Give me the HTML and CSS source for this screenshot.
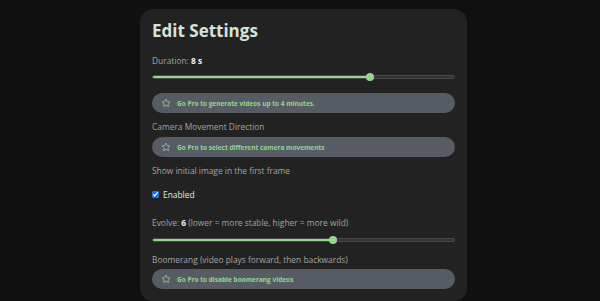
FILE: index.html
```html
<!DOCTYPE html>
<html lang="en">
<head>
    <meta charset="UTF-8">
    <meta name="viewport" content="width=device-width, initial-scale=1.0">
    <title>Edit Settings</title>
    <link rel="stylesheet" href="styles.css">
</head>
<body>
    <div class="settings-card">
        <h1>Edit Settings</h1>

        <div class="field-label label-duration">Duration: <b>8 s</b></div>
        <input type="range" class="slider slider-duration" min="0" max="11" step="0.5" value="8" style="--fill: 71.5%">

        <div class="pro-banner banner-first">
            <svg class="star" viewBox="0 0 24 24"><path d="M12 2.5l2.9 6 6.6.9-4.8 4.6 1.2 6.5L12 17.4l-5.9 3.1 1.2-6.5-4.8-4.6 6.6-.9z"/></svg>
            <span>Go Pro to generate videos up to 4 minutes.</span>
        </div>

        <div class="field-label label-camera">Camera Movement Direction</div>
        <div class="pro-banner banner-tight">
            <svg class="star" viewBox="0 0 24 24"><path d="M12 2.5l2.9 6 6.6.9-4.8 4.6 1.2 6.5L12 17.4l-5.9 3.1 1.2-6.5-4.8-4.6 6.6-.9z"/></svg>
            <span>Go Pro to select different camera movements</span>
        </div>

        <div class="field-label label-initial">Show initial image in the first frame</div>
        <label class="check-row">
            <input type="checkbox" checked>
            <span>Enabled</span>
        </label>

        <div class="field-label label-evolve">Evolve: <b>6</b> (lower = more stable, higher = more wild)</div>
        <input type="range" class="slider slider-evolve" min="0" max="10" step="1" value="6" style="--fill: 60.5%">

        <div class="field-label label-boomerang">Boomerang (video plays forward, then backwards)</div>
        <div class="pro-banner banner-last">
            <svg class="star" viewBox="0 0 24 24"><path d="M12 2.5l2.9 6 6.6.9-4.8 4.6 1.2 6.5L12 17.4l-5.9 3.1 1.2-6.5-4.8-4.6 6.6-.9z"/></svg>
            <span>Go Pro to disable boomerang videos</span>
        </div>
    </div>
</body>
</html>
```

FILE: styles.css
```css
body {
    font-family: 'Open Sans', 'Noto Sans', sans-serif;
    background-color: #101010;
    margin: 0;
    padding: 0 0 0 7px;
    display: flex;
    justify-content: center;
}
.settings-card {
    background-color: #222222;
    border-radius: 13px;
    width: 303px;
    margin-top: 9px;
    padding: 10px 12px 12px 12px;
    display: flex;
    flex-direction: column;
}
h1 {
    margin: 0;
    font-size: 17px;
    line-height: 24px;
    font-weight: 700;
    color: #d6e2da;
}
.field-label {
    font-size: 8.4px;
    line-height: 12px;
    color: #a3a3a3;
}
.field-label b {
    color: #f2f2f2;
    font-weight: 700;
}
.label-duration { margin-top: 12px; }
.label-camera { margin-top: 8px; }
.label-initial { margin-top: 8px; }
.label-evolve { margin-top: 17px; }
.label-boomerang { margin-top: 12px; }

.slider {
    -webkit-appearance: none;
    appearance: none;
    width: 100%;
    height: 4px;
    margin: 0;
    border-radius: 3px;
    border: 1px solid #4a4a4a;
    box-sizing: border-box;
    background: linear-gradient(to right, #93d692 var(--fill), #333333 var(--fill));
    outline: none;
}
.slider::-webkit-slider-thumb {
    -webkit-appearance: none;
    appearance: none;
    width: 8px;
    height: 8px;
    border-radius: 50%;
    background-color: #93d692;
    border: none;
}
.slider-duration { margin-top: 8px; }
.slider-evolve { margin-top: 9px; }

.pro-banner {
    display: flex;
    align-items: center;
    gap: 6px;
    height: 20px;
    padding: 0 9px;
    border-radius: 10px;
    background-color: #575b64;
    color: #93d692;
    font-size: 6.5px;
    font-weight: 700;
}
.banner-first { margin-top: 14px; }
.banner-tight { margin-top: 4px; }
.banner-last { margin-top: 3px; }
.star {
    width: 10px;
    height: 10px;
    fill: none;
    stroke: #93d692;
    stroke-width: 1.8;
    stroke-linejoin: round;
}

.check-row {
    display: flex;
    align-items: center;
    gap: 4px;
    margin-top: 11px;
    height: 12px;
    font-size: 8.4px;
    color: #e6e6e6;
}
.check-row input {
    width: 7px;
    height: 7px;
    margin: 0;
    accent-color: #1a73e8;
}
```
